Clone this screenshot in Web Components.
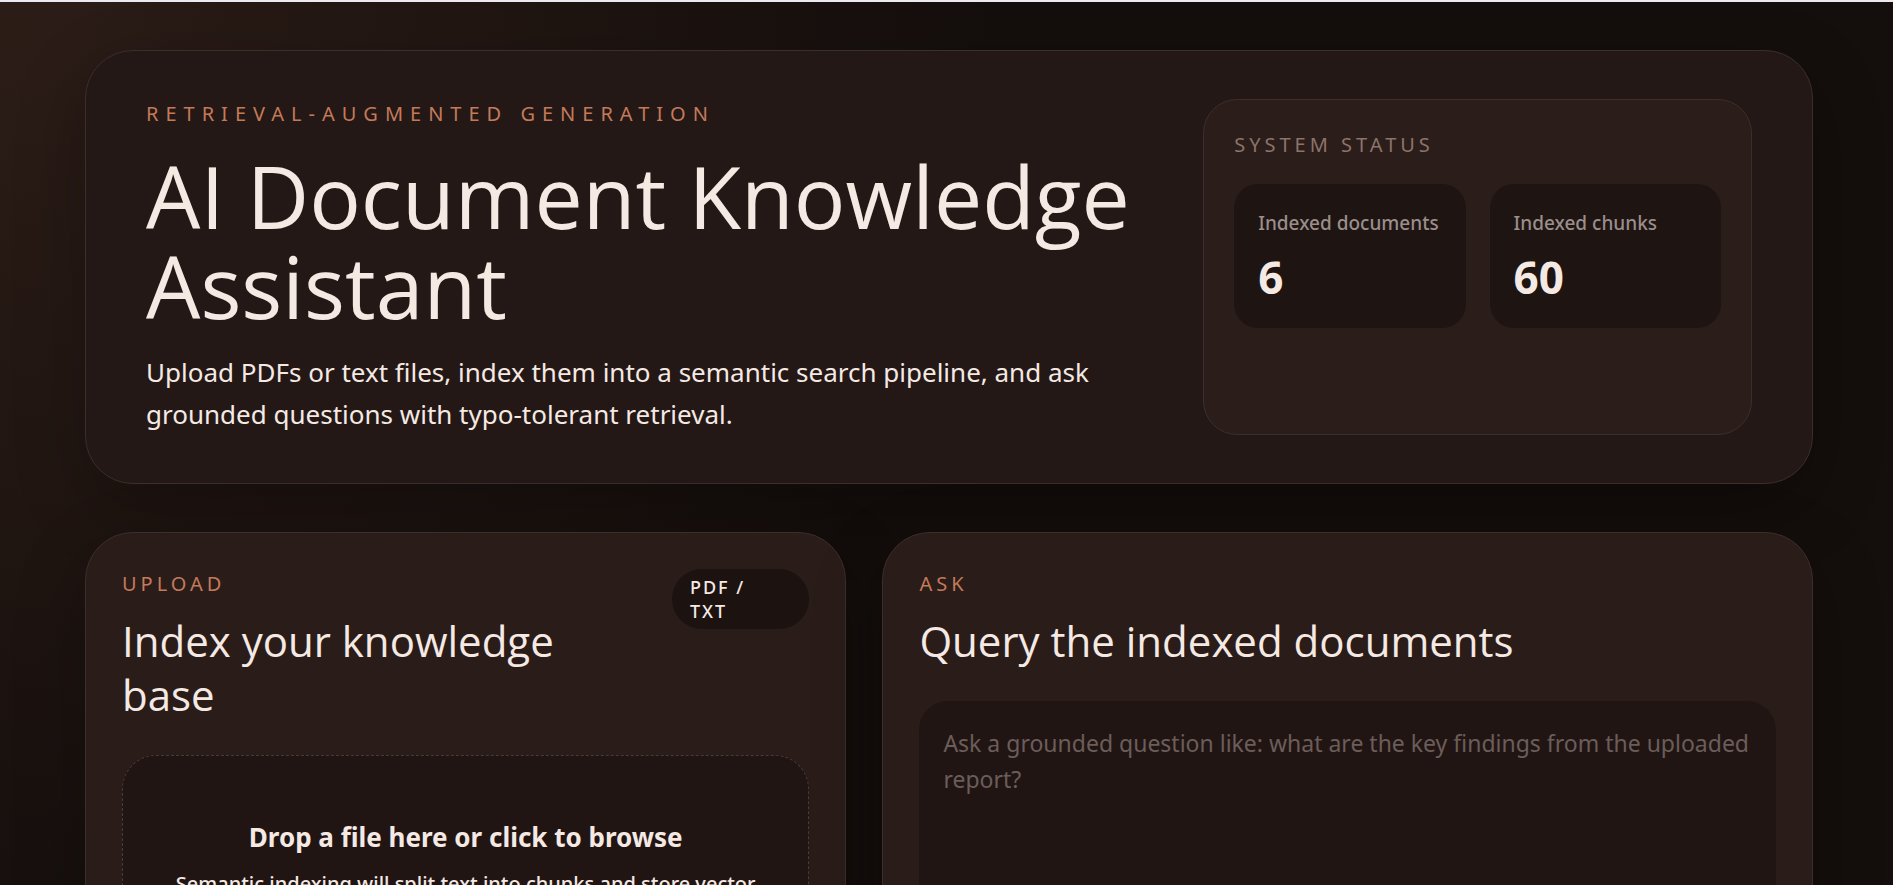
<!DOCTYPE html>
<html lang="en">
<head>
<meta charset="utf-8">
<meta name="viewport" content="width=device-width, initial-scale=1">
<title>AI Document Knowledge Assistant</title>
<style>
  :root {
    --text: #f5e9e4;
    --accent: #c47a5a;
    --muted: #8d736a;
    --line: #3b2e2b;
    --heading: "Segoe UI", "Open Sans", sans-serif;
  }
  html {
    background: #140d0b;
  }
  body {
    margin: 0;
    min-height: 100vh;
    box-sizing: border-box;
    border-top: 2px solid #eceaf0;
    color: var(--text);
    font: 20px/30px "Trebuchet MS", "Noto Sans", sans-serif;
    background:
      radial-gradient(circle at 0 0, rgba(190, 118, 90, 0.14), transparent 1000px),
      #140e0c;
  }
</style>
</head>
<body>
<rag-app></rag-app>

<script>
class RagApp extends HTMLElement {
  constructor() {
    super();
    this.attachShadow({ mode: 'open' });
  }

  connectedCallback() {
    this.shadowRoot.innerHTML = `
      <style>
        :host {
          display: block;
          padding: 48px 80px 48px 85px;
        }
        .panels {
          display: grid;
          grid-template-columns: minmax(0, 0.9fr) minmax(0, 1.1fr);
          gap: 36px;
          margin-top: 48px;
        }
      </style>
      <main>
        <rag-hero></rag-hero>
        <div class="panels">
          <panel-card eyebrow="Upload" heading="Index your knowledge base">
            <file-pill slot="badge">PDF / TXT</file-pill>
            <drop-zone></drop-zone>
          </panel-card>
          <panel-card eyebrow="Ask" heading="Query the indexed documents">
            <ask-box></ask-box>
          </panel-card>
        </div>
      </main>
    `;
  }
}

class RagHero extends HTMLElement {
  constructor() {
    super();
    this.attachShadow({ mode: 'open' });
  }

  connectedCallback() {
    this.shadowRoot.innerHTML = `
      <style>
        :host {
          display: grid;
          grid-template-columns: minmax(0, 1.3fr) minmax(0, 0.7fr);
          gap: 38px;
          padding: 48px 60px;
          border: 1px solid var(--line);
          border-radius: 48px;
          background: #231815;
          box-shadow: 0 24px 72px rgba(0, 0, 0, 0.24);
        }
        .eyebrow {
          margin: 0 0 22px;
          color: var(--accent);
          letter-spacing: 7px;
          text-transform: uppercase;
        }
        h1 {
          margin: 0 0 20px;
          font: 400 86px/90px var(--heading);
        }
        .lead {
          margin: 0;
          font-size: 26px;
          line-height: 42px;
        }
      </style>
      <div>
        <p class="eyebrow">Retrieval-Augmented Generation</p>
        <h1>AI Document Knowledge Assistant</h1>
        <p class="lead">Upload PDFs or text files, index them into a semantic search pipeline, and ask grounded questions with typo-tolerant retrieval.</p>
      </div>
      <status-card heading="System status">
        <stat-tile label="Indexed documents" value="6"></stat-tile>
        <stat-tile label="Indexed chunks" value="60"></stat-tile>
      </status-card>
    `;
  }
}

class StatusCard extends HTMLElement {
  constructor() {
    super();
    this.attachShadow({ mode: 'open' });
  }

  connectedCallback() {
    this.shadowRoot.innerHTML = `
      <style>
        :host {
          display: block;
          padding: 30px;
          border: 1px solid var(--line);
          border-radius: 34px;
          background: #2a1d1a;
        }
        p {
          margin: 0 0 24px;
          color: var(--muted);
          letter-spacing: 4px;
          text-transform: uppercase;
        }
        .tiles {
          display: grid;
          grid-template-columns: repeat(2, minmax(0, 1fr));
          gap: 24px;
        }
      </style>
      <p>${this.getAttribute('heading')}</p>
      <div class="tiles"><slot></slot></div>
    `;
  }
}

class StatTile extends HTMLElement {
  constructor() {
    super();
    this.attachShadow({ mode: 'open' });
  }

  connectedCallback() {
    this.shadowRoot.innerHTML = `
      <style>
        :host {
          display: flex;
          flex-direction: column;
          gap: 12px;
          padding: 24px;
          border-radius: 24px;
          background: #1e1412;
        }
        span {
          color: #9a8e8b;
          font-size: 19px;
          font-weight: 500;
          white-space: nowrap;
        }
        strong {
          font-size: 44px;
          line-height: 54px;
        }
      </style>
      <span>${this.getAttribute('label')}</span>
      <strong>${this.getAttribute('value')}</strong>
    `;
  }
}

class PanelCard extends HTMLElement {
  constructor() {
    super();
    this.attachShadow({ mode: 'open' });
  }

  connectedCallback() {
    this.shadowRoot.innerHTML = `
      <style>
        :host {
          display: block;
          padding: 36px;
          border: 1px solid var(--line);
          border-radius: 48px;
          background: #2a1c19;
          box-shadow: 0 24px 72px rgba(0, 0, 0, 0.24);
        }
        header {
          display: flex;
          align-items: flex-start;
          justify-content: space-between;
          gap: 24px;
          margin-bottom: 33px;
        }
        p {
          margin: 0 0 15px;
          color: var(--accent);
          letter-spacing: 4px;
          text-transform: uppercase;
        }
        h2 {
          margin: 0;
          font: 400 42px/54px var(--heading);
        }
        ::slotted([slot="badge"]) {
          flex: 0 0 20%;
        }
      </style>
      <header>
        <div>
          <p>${this.getAttribute('eyebrow')}</p>
          <h2>${this.getAttribute('heading')}</h2>
        </div>
        <slot name="badge"></slot>
      </header>
      <slot></slot>
    `;
  }
}

class FilePill extends HTMLElement {
  constructor() {
    super();
    this.attachShadow({ mode: 'open' });
  }

  connectedCallback() {
    this.shadowRoot.innerHTML = `
      <style>
        :host {
          display: block;
          box-sizing: border-box;
          padding: 6px 48px 6px 18px;
          border-radius: 30px;
          background: #1c1210;
          font-size: 18px;
          font-weight: 500;
          line-height: 24px;
          letter-spacing: 2px;
        }
      </style>
      <slot></slot>
    `;
  }
}

class DropZone extends HTMLElement {
  constructor() {
    super();
    this.attachShadow({ mode: 'open' });
  }

  connectedCallback() {
    this.shadowRoot.innerHTML = `
      <style>
        :host {
          display: block;
        }
        label {
          display: flex;
          flex-direction: column;
          align-items: center;
          gap: 12px;
          padding: 62px 48px;
          border: 1px dashed #493b38;
          border-radius: 34px;
          background: #211513;
          text-align: center;
          cursor: pointer;
        }
        strong {
          font-size: 26px;
          line-height: 39px;
        }
        span {
          font-weight: 500;
        }
      </style>
      <label for="file">
        <strong>Drop a file here or click to browse</strong>
        <span>Semantic indexing will split text into chunks and store vector embeddings.</span>
      </label>
      <input id="file" type="file" accept=".pdf,.txt" hidden>
    `;
  }
}

class AskBox extends HTMLElement {
  constructor() {
    super();
    this.attachShadow({ mode: 'open' });
  }

  connectedCallback() {
    this.shadowRoot.innerHTML = `
      <style>
        :host {
          display: block;
        }
        textarea {
          display: block;
          box-sizing: border-box;
          width: 100%;
          min-height: 240px;
          padding: 24px;
          border: 0;
          border-radius: 29px;
          background: #211513;
          color: var(--text);
          font: inherit;
          font-size: 23px;
          line-height: 36px;
          resize: none;
        }
        textarea::placeholder {
          color: #6b5d5a;
          opacity: 1;
        }
      </style>
      <textarea aria-label="Question" placeholder="Ask a grounded question like: what are the key findings from the uploaded report?"></textarea>
    `;
  }
}

customElements.define('rag-app', RagApp);
customElements.define('rag-hero', RagHero);
customElements.define('status-card', StatusCard);
customElements.define('stat-tile', StatTile);
customElements.define('panel-card', PanelCard);
customElements.define('file-pill', FilePill);
customElements.define('drop-zone', DropZone);
customElements.define('ask-box', AskBox);
</script>
</body>
</html>
